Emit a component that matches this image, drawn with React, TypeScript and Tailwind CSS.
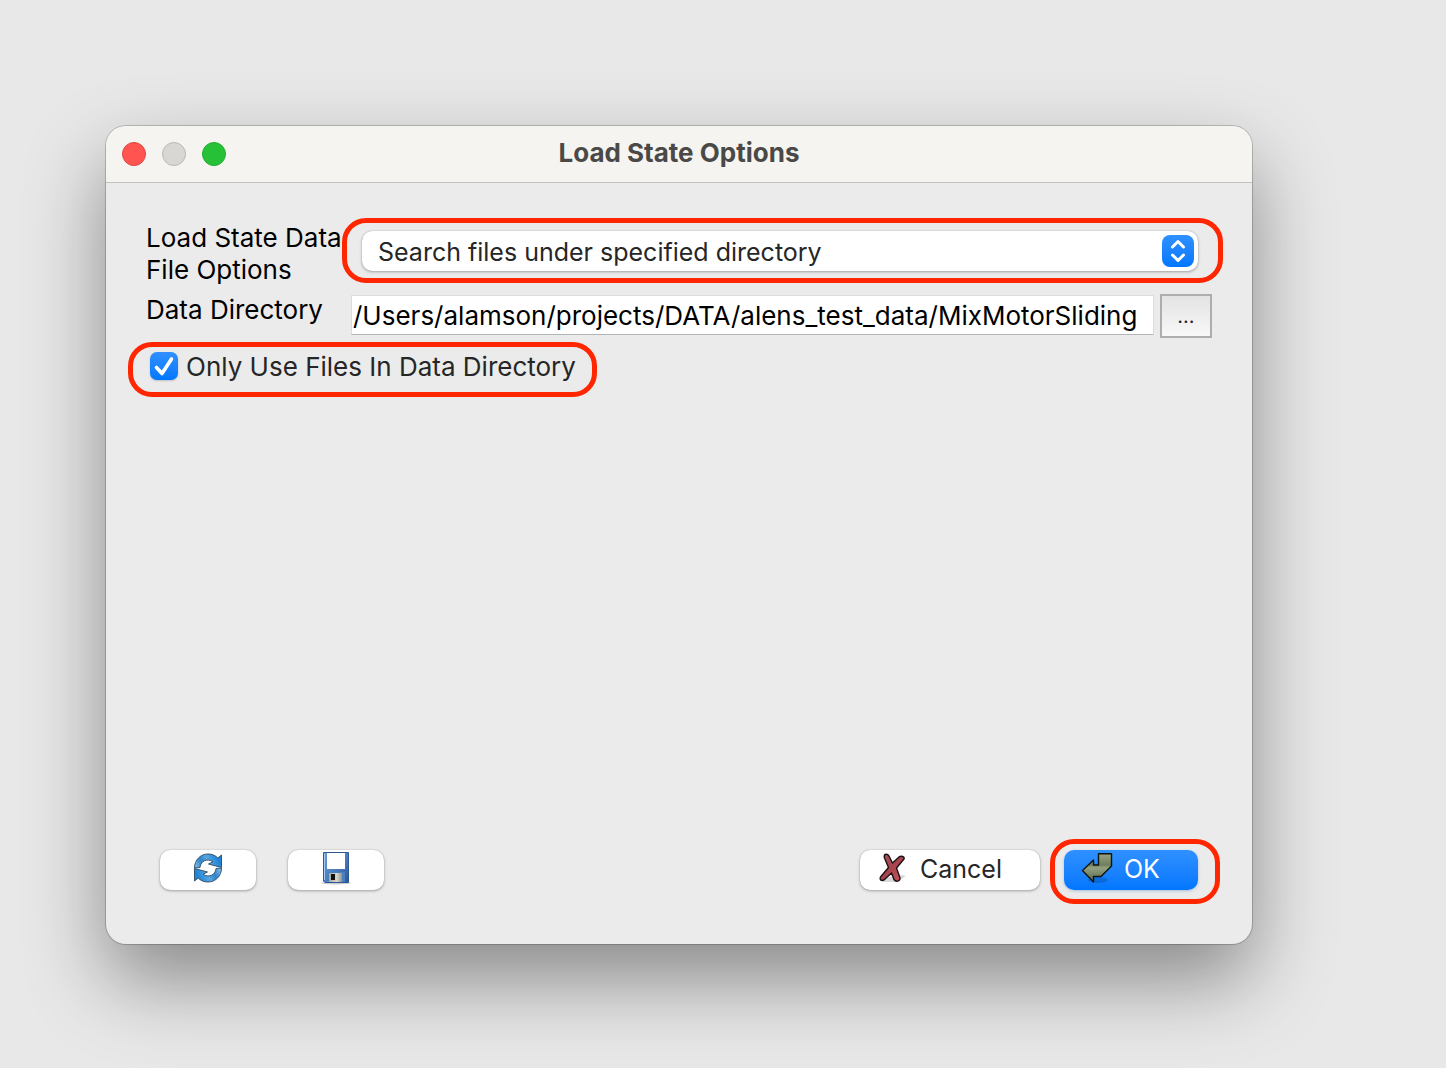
import { useState, type ReactNode } from "react";

function Ring({ className }: { className: string }) {
  return (
    <span
      aria-hidden="true"
      className={`pointer-events-none absolute rounded-[24px] border-[5px] border-[#ff2600] ${className}`}
    />
  );
}

function RefreshIcon() {
  return (
    <svg width="30" height="30" viewBox="0 0 30 30" aria-hidden="true">
      <defs>
        <linearGradient id="refresh" gradientUnits="userSpaceOnUse" x1="1" y1="14" x2="24" y2="4">
          <stop offset="0" stopColor="#8fc6ee" />
          <stop offset="0.35" stopColor="#2c84cb" />
          <stop offset="0.6" stopColor="#5aa6df" />
          <stop offset="1" stopColor="#1f83d6" />
        </linearGradient>
      </defs>
      <g fill="url(#refresh)" stroke="#35546f" strokeWidth="1" strokeLinejoin="round">
        <path
          id="refresh-arrow"
          d="M1.500 15C1.500 7 7.500 1 15 1C19 1 22.500 2.500 24.800 5L28.500 2V14.500L15.500 11L19.800 8.800C15 5 7.500 7.500 7 14.500Z"
        />
        <path
          transform="rotate(180 15 15)"
          d="M1.500 15C1.500 7 7.500 1 15 1C19 1 22.500 2.500 24.800 5L28.500 2V14.500L15.500 11L19.800 8.800C15 5 7.500 7.500 7 14.500Z"
        />
      </g>
    </svg>
  );
}

function SaveIcon() {
  return (
    <svg width="32" height="34" viewBox="0 0 32 34" aria-hidden="true">
      <defs>
        <linearGradient id="floppy" x1="0" y1="0" x2="1" y2="1">
          <stop offset="0" stopColor="#6b9bd2" />
          <stop offset="0.5" stopColor="#4a80c2" />
          <stop offset="1" stopColor="#2d5596" />
        </linearGradient>
        <linearGradient id="shutter" x1="0" y1="0" x2="1" y2="0">
          <stop offset="0" stopColor="#a5a69c" />
          <stop offset="0.6" stopColor="#d9d8cf" />
          <stop offset="1" stopColor="#929289" />
        </linearGradient>
      </defs>
      <ellipse cx="16" cy="32" rx="15" ry="1.500" fill="#000" opacity="0.2" />
      <path d="M3.500 1.500H28.500V31.500H5L3.500 30Z" fill="url(#floppy)" stroke="#2f5795" />
      <path d="M4.500 2.500V29" stroke="#a9cbed" />
      <rect x="7" y="2" width="18" height="16" fill="#fff" />
      <rect x="7" y="21" width="18" height="10" fill="#4a7fc0" />
      <rect x="9" y="22" width="13" height="9" fill="url(#shutter)" />
      <rect x="11" y="23" width="4" height="6" fill="#111" />
    </svg>
  );
}

function CancelIcon() {
  return (
    <svg width="30" height="32" viewBox="0 0 30 32" aria-hidden="true">
      <defs>
        <linearGradient id="cross" x1="0" y1="0" x2="1" y2="1">
          <stop offset="0" stopColor="#a8505a" />
          <stop offset="0.5" stopColor="#a9444d" />
          <stop offset="1" stopColor="#c95660" />
        </linearGradient>
      </defs>
      <path d="M3 26L11 24L24 22L28 23L19 29L6 29Z" fill="#000" opacity="0.15" />
      <path
        d="M7 1.500C9 0.500 10.500 2 11.500 4L14.500 10L21 4C23 2.500 27 3.500 26 6L18.500 15L22 25C22 28.500 18 29.500 16 26.500L13.500 20L7 26C5 28.500 1 27.500 2.500 24L10.500 14.500L6.500 5C6 3.500 6 2.500 7 1.500Z"
        fill="url(#cross)"
        stroke="#1c1114"
        strokeWidth="1.400"
        strokeLinejoin="round"
      />
    </svg>
  );
}

function ApplyIcon() {
  return (
    <svg width="32" height="32" viewBox="0 0 32 32" aria-hidden="true">
      <defs>
        <linearGradient id="arrow" x1="0" y1="0" x2="0" y2="1">
          <stop offset="0" stopColor="#98a585" />
          <stop offset="0.4" stopColor="#6f7e5e" />
          <stop offset="0.5" stopColor="#94a17f" />
          <stop offset="1" stopColor="#56644a" />
        </linearGradient>
      </defs>
      <ellipse cx="17" cy="27" rx="10" ry="3" fill="#003a80" opacity="0.3" />
      <path
        d="M17.500 0.700H30.500V13L20 23.500H12.500V29L1.500 17.500L12.500 7V12H17.500Z"
        fill="url(#arrow)"
        stroke="#10140d"
        strokeWidth="1.400"
        strokeLinejoin="round"
      />
    </svg>
  );
}

function PushButton({ label, className, children }: { label?: string; className: string; children: ReactNode }) {
  return (
    <button
      type="button"
      aria-label={label}
      className={`flex h-10 items-center rounded-[10px] bg-white shadow-[0_0_1px_rgba(0,0,0,0.3),0_1px_3px_rgba(0,0,0,0.3)] ${className}`}
    >
      {children}
    </button>
  );
}

export default function App() {
  const [only, setOnly] = useState(true);
  const [dir, setDir] = useState("/Users/alamson/projects/DATA/alens_test_data/MixMotorSliding");
  return (
    <div className="flex min-h-screen flex-col bg-[#e8e8e8] pt-[126px] pr-[194px] pb-[124px] pl-[106px] font-['Inter',sans-serif] text-[26px] leading-8 text-black">
      <main className="flex flex-1 flex-col overflow-hidden rounded-[20px] bg-[#ebebeb] shadow-[0_0_0_1px_rgba(0,0,0,0.16),0_0_2px_rgba(0,0,0,0.12),0_36px_80px_rgba(0,0,0,0.41)]">
        <header className="grid h-[57px] grid-cols-[1fr_auto_1fr] items-center border-b border-[#c3c2c0] bg-[#f5f4f0] px-4">
          <div className="flex gap-4">
            <button type="button" aria-label="Close" className="size-6 rounded-full border border-[#e2443f] bg-[#ff544f]" />
            <button type="button" aria-label="Minimize" className="size-6 rounded-full border border-[#b9b8b5] bg-[#d8d7d3]" />
            <button type="button" aria-label="Zoom" className="size-6 rounded-full border border-[#1fae2f] bg-[#27c138]" />
          </div>
          <h1 className="pb-0.5 font-bold text-[#4a4947]">Load State Options</h1>
        </header>

        <form className="flex flex-1 flex-col px-10 pt-[39px] pb-[54px]" onSubmit={(e) => e.preventDefault()}>
          <div className="grid grid-cols-[205px_1fr] gap-y-2">
            <label htmlFor="mode" className="whitespace-nowrap">
              Load State Data
              <br />
              File Options
            </label>
            <div className="relative mt-[9px] mr-[14px] ml-[11px] h-10">
              <select
                id="mode"
                className="h-10 w-full appearance-none rounded-[10px] bg-white px-4 pt-0.5 text-[25px] text-[#262626] shadow-[0_0_1px_rgba(0,0,0,0.3),0_1px_3px_rgba(0,0,0,0.3)]"
              >
                <option>Search files under specified directory</option>
              </select>
              <span className="pointer-events-none absolute top-1 right-1 flex size-8 items-center justify-center rounded-lg bg-linear-to-b from-[#2f90ff] to-[#0077ff]">
                <svg width="32" height="32" viewBox="0 0 32 32" fill="none" stroke="#fff" strokeWidth="3" strokeLinecap="round" strokeLinejoin="round" aria-hidden="true">
                  <path d="M10.500 12L16 6.500L21.500 12M10.500 20L16 25.500L21.500 20" />
                </svg>
              </span>
              <Ring className="-top-[13px] -right-[25px] -bottom-3 -left-5" />
            </div>

            <label htmlFor="dir">Data Directory</label>
            <div className="flex gap-1.5">
              <input
                id="dir"
                type="text"
                value={dir}
                onChange={(e) => setDir(e.target.value)}
                className="mt-px h-10 min-w-0 flex-1 border border-[#dcdcdc] border-b-[#b4b4b4] bg-white px-px"
              />
              <button
                type="button"
                aria-label="Browse"
                className="h-11 w-[52px] border-2 border-[#adadad] bg-linear-to-b from-[#e3e3e3] to-[#f8f8f8] text-xl text-[#262626]"
              >
                ...
              </button>
            </div>
          </div>

          <div className="relative mt-2 ml-1 flex h-10 items-center self-start">
            <label className="flex items-center gap-2 text-[#262626]">
              <span className="relative size-7">
                <input
                  type="checkbox"
                  checked={only}
                  onChange={(e) => setOnly(e.target.checked)}
                  className="block size-7 appearance-none rounded-[7px] bg-white shadow-[0_1px_2px_rgba(0,0,0,0.2)] checked:bg-linear-to-b checked:from-[#2f90ff] checked:to-[#0077ff]"
                />
                {only && (
                  <svg className="pointer-events-none absolute inset-0" width="28" height="28" viewBox="0 0 28 28" fill="none" stroke="#fff" strokeWidth="3.600" strokeLinecap="round" strokeLinejoin="round" aria-hidden="true">
                    <path d="M6.500 15.500L12 21.500L21.500 7" />
                  </svg>
                )}
              </span>
              <span className="pt-0.5">Only Use Files In Data Directory</span>
            </label>
            <Ring className="-top-1 -right-[21px] -bottom-[11px] -left-[22px]" />
          </div>

          <div className="mt-auto flex items-center px-[14px] text-[25px]">
            <PushButton label="Reset" className="mr-8 w-24 justify-center pb-1">
              <RefreshIcon />
            </PushButton>
            <PushButton label="Save" className="w-24 justify-center pb-1">
              <SaveIcon />
            </PushButton>
            <PushButton className="mr-6 ml-auto w-[180px] gap-3 pb-0.5 pl-[18px] text-[#262626]">
              <CancelIcon />
              Cancel
            </PushButton>
            <div className="relative">
              <button
                type="submit"
                className="flex h-10 w-[134px] items-center gap-[11px] rounded-[10px] bg-linear-to-b from-[#2f90ff] to-[#0077ff] pb-0.5 pl-[17px] text-white shadow-[0_1px_3px_rgba(0,90,200,0.3)]"
              >
                <ApplyIcon />
                OK
              </button>
              <Ring className="-top-[11px] -right-[22px] -bottom-[14px] -left-[14px]" />
            </div>
          </div>
        </form>
      </main>
    </div>
  );
}
